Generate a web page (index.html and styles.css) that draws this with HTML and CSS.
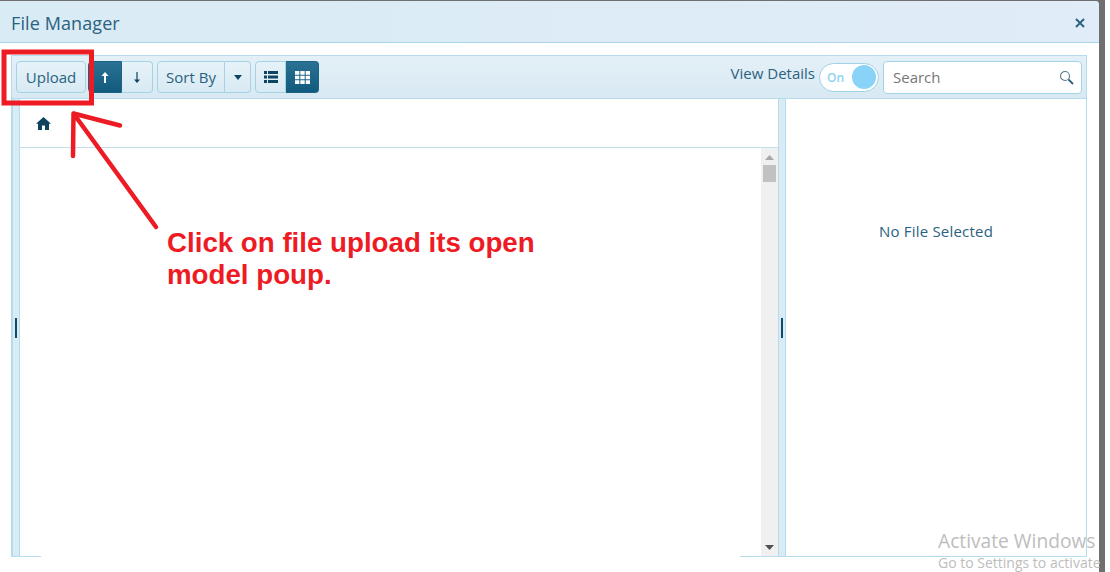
FILE: index.html
```html
<!DOCTYPE html>
<html lang="en">
<head>
<meta charset="utf-8">
<title>File Manager</title>
<link rel="stylesheet" href="styles.css">
</head>
<body>
<div class="dialog">
  <header class="titlebar">
    <span class="title">File Manager</span>
    <svg class="close" width="10" height="10" viewBox="0 0 10 10"><path d="M1 1l8 8M9 1l-8 8" stroke="#2f6580" stroke-width="2" fill="none"/></svg>
  </header>
  <div class="content">
    <div class="manager">
      <div class="toolbar">
        <button class="btn upload">Upload</button>
        <div class="group updown">
          <button class="btn seg-up active"><svg width="8" height="11" viewBox="0 0 8 11"><path d="M4 0L7.500 4H5v7H3V4H.5z" fill="#fff"/></svg></button>
          <button class="btn seg-down"><svg width="8" height="11" viewBox="0 0 8 11"><path d="M4 11L1 7.500h2.400V0h1.200v7.500H7z" fill="#0e4460"/></svg></button>
        </div>
        <div class="group">
          <button class="btn sort">Sort By</button>
          <button class="btn caret"><svg width="8" height="5" viewBox="0 0 8 5"><path d="M0 0h8L4 5z" fill="#0e4460"/></svg></button>
        </div>
        <div class="group">
          <button class="btn view-list"><svg width="14" height="12" viewBox="0 0 14 12"><path d="M0 0h3v3H0zM4 0h10v3H4zM0 4.500h3v3H0zM4 4.500h10v3H4zM0 9h3v3H0zM4 9h10v3H4z" fill="#0e4460"/></svg></button>
          <button class="btn view-grid active"><svg width="15" height="13" viewBox="0 0 15 13"><path d="M0 0h4.300v3.700H0zM5.300 0h4.400v3.700H5.300zM10.700 0H15v3.700h-4.300zM0 4.700h4.300v3.600H0zM5.300 4.700h4.400v3.600H5.300zM10.700 4.700H15v3.600h-4.300zM0 9.300h4.300V13H0zM5.300 9.300h4.400V13H5.300zM10.700 9.300H15V13h-4.300z" fill="#fff"/></svg></button>
        </div>
        <span class="details-label">View Details</span>
        <div class="switch"><span class="switch-on">On</span><span class="knob"></span></div>
        <div class="search">
          <span class="search-text">Search</span>
          <svg width="15" height="15" viewBox="0 0 15 15"><circle cx="6" cy="6" r="4.500" fill="none" stroke="#55788c" stroke-width="1.100"/><path d="M9.500 9.500l4.500 4.500" stroke="#2f5f78" stroke-width="1.800"/></svg>
        </div>
      </div>
      <div class="panes">
        <div class="splitter"><i class="grip"></i></div>
        <div class="main-pane">
          <div class="breadcrumb">
            <svg width="15" height="13" viewBox="0 0 15 13"><path d="M7.500 0L15 6.800h-2V13H9V8.500H6V13H2V6.800H0z" fill="#0e4460"/></svg>
          </div>
          <div class="listing">
            <div class="list-body"></div>
            <div class="scrollbar">
              <svg class="arrow" width="9" height="5" viewBox="0 0 9 5"><path d="M4.500 0L9 5H0z" fill="#a8a8a8"/></svg>
              <div class="thumb"></div>
              <svg class="arrow bottom" width="9" height="5" viewBox="0 0 9 5"><path d="M0 0h9L4.500 5z" fill="#505050"/></svg>
            </div>
          </div>
        </div>
        <div class="splitter"><i class="grip"></i></div>
        <div class="detail-pane">No File Selected</div>
      </div>
      <div class="footer-line"><i class="line-left"></i><i class="line-right"></i></div>
    </div>
  </div>
</div>

<div class="callout">Click on file upload its open<br>model poup.</div>

<svg class="annotation" width="1105" height="572" viewBox="0 0 1105 572" fill="none">
  <rect x="4" y="52" width="87.500" height="51" stroke="#ed1c24" stroke-width="5"/>
  <path d="M156 227L73.500 113.500M73.500 113.500L120 125.500M73.500 113.500L73 156" stroke="#ed1c24" stroke-width="4.500" stroke-linecap="round"/>
</svg>

<div class="watermark">
  <div class="wm-title">Activate Windows</div>
  <div class="wm-sub">Go to Settings to activate</div>
</div>
</body>
</html>
```
FILE: styles.css
```css
* { box-sizing: border-box; }
html { margin: 0; height: 572px; overflow: hidden; background: #fff; }
body { margin: 0; width: 1105px; height: 572px; padding-top: 1px; background: #6f6f6f; font-family: "Open Sans", sans-serif; color: #1d4f6b; position: relative; }
.dialog { width: 1099px; height: 571px; background: #fff; border-radius: 0 4px 0 0; overflow: hidden; display: flex; flex-direction: column; }
.titlebar { height: 42px; flex: none; display: flex; align-items: center; justify-content: space-between; padding: 3px 14px 0 11px; background: linear-gradient(90deg, #d9ebf5, #e0ecf7); border-bottom: 1px solid #a9d5e8; }
.title { font-size: 18px; color: #2a6280; letter-spacing: .1px; }
.close { display: block; }
.content { flex: 1; padding: 12px 12px 14px 11px; }
.manager { width: 1076px; height: 502px; display: flex; flex-direction: column; }
.toolbar { height: 44px; flex: none; display: flex; align-items: center; padding: 0 4px 0 4px; background: linear-gradient(180deg, #e4f0f7, #d8e9f3); border: 1px solid #b5dcec; }
.btn { height: 32px; padding: 0; font: 15px "Open Sans", sans-serif; color: #2a6280; background: linear-gradient(180deg, #e6f2f8, #d9eaf4); border: 1px solid #a5d3e6; border-radius: 4px; display: flex; align-items: center; justify-content: center; }
.btn.upload { width: 70px; }
.group { display: flex; margin-left: 4px; }
.group.updown { margin-left: 2px; }
.group .btn:first-child { border-radius: 4px 0 0 4px; }
.group .btn:last-child { border-radius: 0 4px 4px 0; border-left: 0; }
.btn.active { background: linear-gradient(180deg, #2a7193, #125b7e); border-color: #1a6384; }
.seg-up { width: 34px; }
.seg-down { width: 31px; }
.sort { width: 68px; }
.caret { width: 26px; }
.view-list { width: 31px; }
.view-grid { width: 33px; }
.details-label { margin-left: auto; margin-top: -8px; font-size: 15px; color: #2a6280; }
.switch { width: 60px; height: 29px; margin-left: 4px; border: 1px solid #9fd2e6; border-radius: 15px; background: #fff; display: flex; align-items: center; justify-content: space-between; padding: 0 2px 0 7px; }
.switch-on { font-size: 12px; font-weight: 600; color: #8fd3f2; }
.knob { width: 24px; height: 24px; border-radius: 50%; background: #88d3f7; }
.search { width: 199px; height: 33px; margin-left: 4px; background: #fff; border: 1px solid #a5d3e6; border-radius: 4px; display: flex; align-items: center; justify-content: space-between; padding: 0 7px 0 9px; }
.search-text { font-size: 15px; color: #777; }
.search svg { display: block; }
.panes { flex: 1; display: flex; min-height: 0; border-left: 1px solid #b5dcec; border-right: 1px solid #b5dcec; }
.splitter { width: 8px; flex: none; background: #d9ebf4; border-left: 1px solid #b5dcec; border-right: 1px solid #b5dcec; display: flex; align-items: center; justify-content: center; }
.grip { display: block; width: 2px; height: 20px; background: #0e4a6a; }
.main-pane { width: 758px; flex: none; display: flex; flex-direction: column; }
.breadcrumb { height: 49px; flex: none; display: flex; align-items: center; padding-left: 16px; border-bottom: 1px solid #c2dfec; }
.listing { flex: 1; min-height: 0; display: flex; }
.list-body { flex: 1; }
.scrollbar { width: 17px; flex: none; background: #f0f0f0; display: flex; flex-direction: column; align-items: center; padding: 7px 0 6px; }
.arrow { display: block; flex: none; }
.arrow.bottom { margin-top: auto; }
.thumb { width: 13px; height: 17px; margin-top: 5px; background: #c1c1c1; }
.detail-pane { flex: 1; display: flex; justify-content: center; padding-top: 122px; font-size: 15px; letter-spacing: .2px; color: #2a6280; }
.footer-line { height: 1px; flex: none; display: flex; justify-content: space-between; }
.line-left { width: 30px; background: #b5dcec; }
.line-right { width: 347px; background: #b5dcec; }
.callout { position: absolute; left: 167px; top: 227px; font: bold 27.700px/32px "Liberation Sans", sans-serif; color: #ed1c24; }
.annotation { position: absolute; left: 0; top: 0; pointer-events: none; }
.watermark { position: absolute; left: 938px; top: 529px; white-space: nowrap; color: #bdbdbd; }
.wm-title { font: 19.200px/24px "Open Sans", sans-serif; }
.wm-sub { font: 14px/20px "Open Sans", sans-serif; }
```
